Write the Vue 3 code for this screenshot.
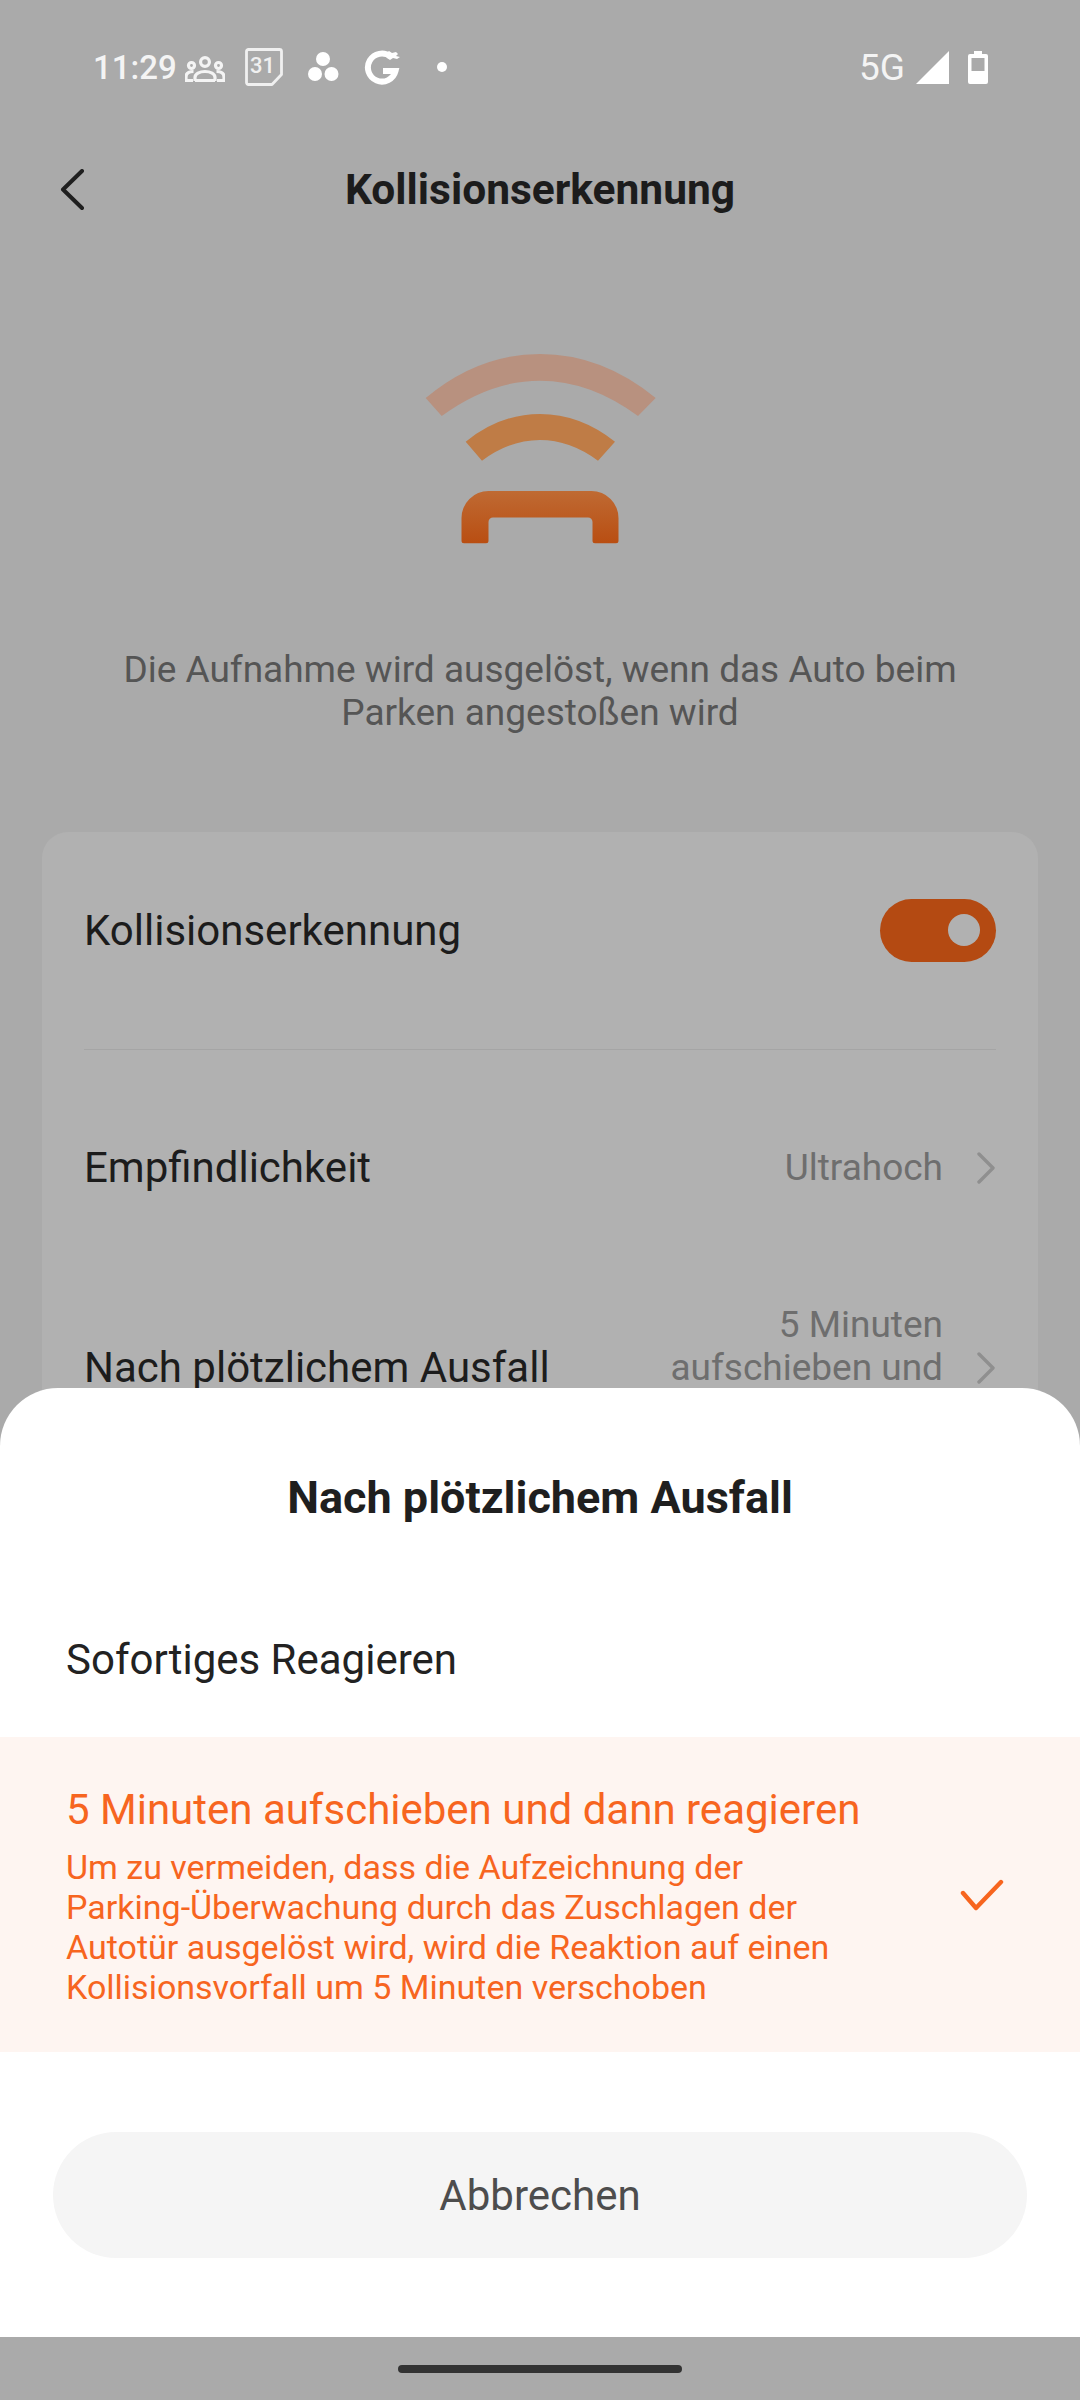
<script setup>
const rows = [
  'Um zu vermeiden, dass die Aufzeichnung der',
  'Parking-Überwachung durch das Zuschlagen der',
  'Autotür ausgelöst wird, wird die Reaktion auf einen',
  'Kollisionsvorfall um 5 Minuten verschoben'
]
</script>

<template>
  <div class="page">
    <div class="status">
      <span class="time">11:29</span>
      <svg class="ic-people" width="40" height="26" viewBox="0 0 40 26" fill="none" stroke="#f4f4f4" stroke-width="3.200">
        <circle cx="20" cy="6" r="4.400" />
        <circle cx="6.500" cy="9.500" r="3" />
        <circle cx="33.500" cy="9.500" r="3" />
        <path d="M10 25v-3.500c0-3.500 4.500-6 10-6s10 2.500 10 6V25" />
        <path d="M8.500 15.500c-5 0-7.500 2-7.500 5.500v4M31.500 15.500c5 0 7.500 2 7.500 5.500v4" />
        <path d="M0 24.500h8M32 24.500h8M10 24.500h20" />
      </svg>
      <span class="ic-cal">
        <svg width="38" height="38" viewBox="0 0 38 38" fill="none" stroke="#f0f0f0" stroke-width="2.800" stroke-linejoin="round">
          <path d="M3.500 1.500h31a2 2 0 0 1 2 2v23l-9.500 10H3.500a2 2 0 0 1-2-2V3.500a2 2 0 0 1 2-2z" />
        </svg>
        <span class="cal-num">31</span>
      </span>
      <svg class="ic-dots" width="32" height="32" viewBox="0 0 32 32" fill="#fff">
        <circle cx="16" cy="8" r="7" />
        <circle cx="8" cy="23" r="7" />
        <circle cx="24.500" cy="23" r="7" />
      </svg>
      <svg class="ic-g" width="38" height="38" viewBox="0 0 38 38" fill="none" stroke="#fff">
        <path d="M26.500 8.500A14 14 0 1 0 31.500 23H19" stroke-width="6" />
        <path d="M21 6l4-3 3 2 4-1 2 2-2 2 4 1-3 2-4-1-3 2-3-2z" fill="#fff" stroke="none" />
      </svg>
      <span class="ic-dot"></span>
      <span class="spacer"></span>
      <span class="net">5G</span>
      <svg class="ic-signal" width="33" height="33" viewBox="0 0 33 33" fill="#fff"><path d="M33 0v33H0z" /></svg>
      <svg class="ic-batt" width="20" height="34" viewBox="0 0 20 34">
        <path d="M6 1h8v3h4a2 2 0 0 1 2 2v26a2 2 0 0 1-2 2H2a2 2 0 0 1-2-2V6a2 2 0 0 1 2-2h4z" fill="#fff" />
        <rect x="3.500" y="8" width="13" height="13" fill="#aaa" />
      </svg>
    </div>

    <header class="head">
      <svg class="back" width="26" height="42" viewBox="0 0 26 42" fill="none" stroke="#1f1f1f" stroke-width="4" stroke-linecap="round" stroke-linejoin="round">
        <path d="M23 2L4 20.500 23 39" />
      </svg>
      <h1 class="head-title">Kollisionserkennung</h1>
    </header>

    <div class="hero">
      <svg width="280" height="240" viewBox="400 330 280 240">
        <defs>
          <linearGradient id="handle" x1="0" y1="0" x2="0" y2="1">
            <stop offset="0" stop-color="#bf6a33" />
            <stop offset="1" stop-color="#b94e12" />
          </linearGradient>
        </defs>
        <path d="M425.700 398Q478 354 540 354T655.700 398L638 416Q590 380.700 540 380.700T441.700 416z" fill="#b8917f" />
        <path d="M465.700 441.700Q500 414 540 414T615 441.700L598 460.700Q570 440 540 440T482 460.700z" fill="#bf7c46" />
        <path d="M464 543.300a2.500 2.500 0 0 1-2.500-2.500V518a27 27 0 0 1 27-27h103a27 27 0 0 1 27 27v22.800a2.500 2.500 0 0 1-2.500 2.500h-21a2.500 2.500 0 0 1-2.500-2.500V522a4.500 4.500 0 0 0-4.500-4.500h-95a4.500 4.500 0 0 0-4.500 4.500v18.800a2.500 2.500 0 0 1-2.500 2.500z" fill="url(#handle)" />
      </svg>
    </div>

    <p class="desc">Die Aufnahme wird ausgelöst, wenn das Auto beim<br />Parken angestoßen wird</p>

    <section class="card">
      <div class="row row-first">
        <span class="label">Kollisionserkennung</span>
        <span class="toggle"><span class="knob"></span></span>
      </div>
      <div class="divider"></div>
      <div class="row row-second">
        <span class="label">Empfindlichkeit</span>
        <span class="value">Ultrahoch</span>
        <svg class="chev" width="20" height="32" viewBox="0 0 20 32" fill="none" stroke="#8f8f8f" stroke-width="3.400" stroke-linecap="round" stroke-linejoin="round"><path d="M3 2l14 14L3 30" /></svg>
      </div>
      <div class="row row-third">
        <span class="label">Nach plötzlichem Ausfall</span>
        <span class="value">5 Minuten<br />aufschieben und<br />dann reagieren</span>
        <svg class="chev" width="20" height="32" viewBox="0 0 20 32" fill="none" stroke="#8f8f8f" stroke-width="3.400" stroke-linecap="round" stroke-linejoin="round"><path d="M3 2l14 14L3 30" /></svg>
      </div>
    </section>

    <div class="overlay">
      <div class="sheet">
        <h2 class="sheet-title">Nach plötzlichem Ausfall</h2>
        <div class="opt">Sofortiges Reagieren</div>
        <div class="opt-active">
          <div class="opt-text">
            <div class="opt-title">5 Minuten aufschieben und dann reagieren</div>
            <div class="opt-desc">
              <div v-for="line in rows" :key="line">{{ line }}</div>
            </div>
          </div>
          <svg class="check" width="44" height="34" viewBox="0 0 44 34" fill="none" stroke="#f7651f" stroke-width="4.400" stroke-linecap="round" stroke-linejoin="round"><path d="M3 14l13 15L41 3" /></svg>
        </div>
        <button class="cancel">Abbrechen</button>
      </div>
      <div class="navbar"><span class="home"></span></div>
    </div>
  </div>
</template>

<style>
html, body { margin: 0; padding: 0; }
</style>

<style scoped>
.page {
  position: relative;
  width: 1080px;
  height: 2400px;
  overflow: hidden;
  background: #aaaaaa;
  font-family: Roboto, "Liberation Sans", sans-serif;
  color: #1d1d1d;
}
.status {
  display: flex;
  align-items: center;
  height: 134px;
  padding: 0 92px 0 93px;
  color: #fff;
  box-sizing: border-box;
}
.time { font-size: 33px; font-weight: 500; color: #f4f4f4; width: 92px; }
.ic-people { margin-top: 4px; }
.ic-cal { position: relative; width: 38px; height: 38px; margin-left: 20px; }
.ic-cal svg { display: block; }
.cal-num {
  position: absolute; left: 0; top: 0; width: 35px; line-height: 36px;
  text-align: center; font-size: 22px; font-weight: 500; color: #f0f0f0;
}
.ic-dots { margin-left: 24px; }
.ic-g { margin-left: 25px; }
.ic-dot { width: 10px; height: 10px; border-radius: 50%; background: #fff; margin-left: 35px; }
.spacer { flex: 1; }
.net { font-size: 37px; color: #f4f4f4; margin-right: 11px; }
.ic-signal { margin-right: 19px; }

.head {
  position: relative;
  height: 56px;
  margin-top: 28px;
  display: flex;
  align-items: center;
  justify-content: center;
}
.back { position: absolute; left: 59px; top: 7px; }
.head-title { margin: 0; font-size: 42.500px; font-weight: 700; line-height: 56px; color: #1c1c1c; }

.hero { display: flex; justify-content: center; margin-top: 112px; height: 240px; }

.desc {
  margin: 78px 0 0;
  text-align: center;
  font-size: 37px;
  line-height: 43px;
  color: #555555;
}

.card {
  margin: 98px 42px 0;
  height: 1000px;
  background: #b1b1b1;
  border-radius: 26px;
  padding: 0 42px;
  box-sizing: border-box;
}
.row { display: flex; align-items: center; }
.row-first { height: 196px; margin-bottom: 21px; justify-content: space-between; }
.row-second { height: 235px; }
.row-third { height: 129px; margin-top: 18px; }
.label { flex: 1; font-size: 42px; color: #1c1c1c; }
.value { font-size: 37px; line-height: 43px; color: #6e6e6e; text-align: right; }
.chev { margin-left: 33px; }
.divider { height: 1px; background: #a5a5a5; }
.toggle {
  position: relative;
  width: 116px;
  height: 63px;
  border-radius: 32px;
  background: #b44a12;
}
.knob {
  position: absolute;
  right: 16px;
  top: 15.500px;
  width: 32px;
  height: 32px;
  border-radius: 50%;
  background: #b1b1b1;
}

.overlay {
  position: absolute;
  left: 0;
  right: 0;
  top: 1388px;
  bottom: 0;
  display: flex;
  flex-direction: column;
}
.sheet {
  flex: 1;
  background: #ffffff;
  border-radius: 58px 58px 0 0;
  display: flex;
  flex-direction: column;
}
.sheet-title {
  margin: 0;
  padding-top: 83px;
  height: 54px;
  line-height: 54px;
  text-align: center;
  font-size: 45px;
  font-weight: 700;
  color: #1f1f1f;
}
.opt {
  margin-top: 108px;
  padding-left: 66px;
  height: 54px;
  line-height: 54px;
  font-size: 42px;
  color: #222;
}
.opt-active {
  margin-top: 50px;
  height: 315px;
  background: #fef5f1;
  display: flex;
  align-items: center;
  padding: 0 60px 0 66px;
  box-sizing: border-box;
}
.opt-text { flex: 1; padding-top: 4px; }
.opt-title { font-size: 42px; line-height: 48px; color: #f7651f; margin-bottom: 13px; }
.opt-desc { font-size: 34px; line-height: 40px; color: #f7651f; }
.check { margin-top: 2px; margin-right: 16px; }
.cancel {
  margin: 80px 53px 0;
  height: 126px;
  border: 0;
  border-radius: 63px;
  background: #f5f5f5;
  font-family: inherit;
  font-size: 42px;
  color: #4d4d4d;
}
.navbar { height: 63px; display: flex; justify-content: center; align-items: center; }
.home { width: 284px; height: 8px; border-radius: 4px; background: #333; }
</style>
